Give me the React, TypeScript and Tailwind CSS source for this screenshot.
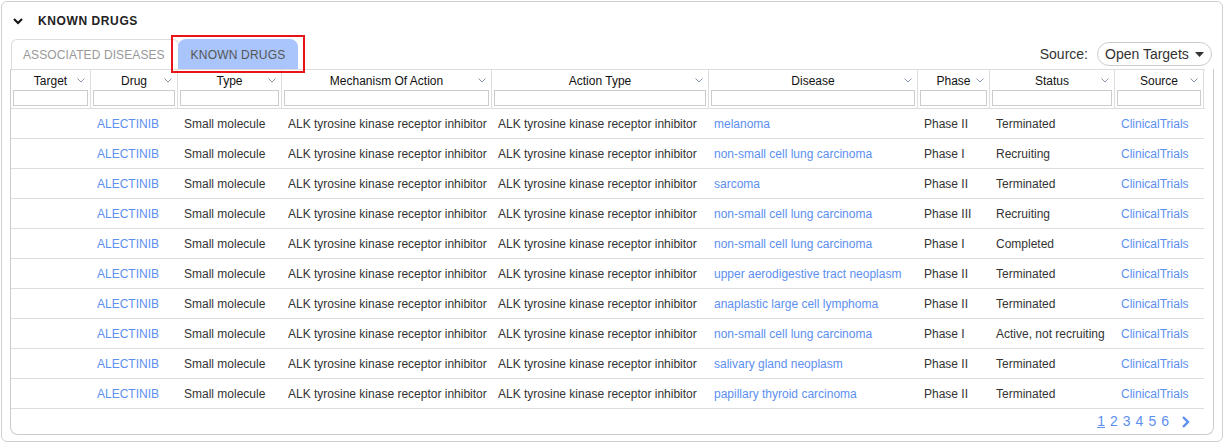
import React from "react";

const cols = [
  { name: "Target", w: 80 },
  { name: "Drug", w: 87 },
  { name: "Type", w: 104 },
  { name: "Mechanism Of Action", w: 210 },
  { name: "Action Type", w: 217 },
  { name: "Disease", w: 209 },
  { name: "Phase", w: 72 },
  { name: "Status", w: 125 },
  { name: "Source", w: 89 },
];

const rows: [string, string, string][] = [
  ["melanoma", "Phase II", "Terminated"],
  ["non-small cell lung carcinoma", "Phase I", "Recruiting"],
  ["sarcoma", "Phase II", "Terminated"],
  ["non-small cell lung carcinoma", "Phase III", "Recruiting"],
  ["non-small cell lung carcinoma", "Phase I", "Completed"],
  ["upper aerodigestive tract neoplasm", "Phase II", "Terminated"],
  ["anaplastic large cell lymphoma", "Phase II", "Terminated"],
  ["non-small cell lung carcinoma", "Phase I", "Active, not recruiting"],
  ["salivary gland neoplasm", "Phase II", "Terminated"],
  ["papillary thyroid carcinoma", "Phase II", "Terminated"],
];

function Chev() {
  return (
    <svg width="8" height="5" viewBox="0 0 8 5" className="absolute right-[5px] top-[8px]">
      <polyline points="0.5,0.5 4,4 7.5,0.5" fill="none" stroke="#8795ab" strokeWidth="1" />
    </svg>
  );
}

export default function App() {
  return (
    <div className="bg-white w-[1224px] h-[444px] pt-[1px] pl-[1px] text-[12px] text-[#333]" style={{ fontFamily: '"Liberation Sans", Arial, sans-serif' }}>
      <div className="w-[1222px] h-[441px] border border-[#cfcfcf] rounded-[6px] flex flex-col">
        {/* title */}
        <div className="h-[36px] flex items-center pl-[10px] pt-[1px]">
          <svg width="12" height="12" viewBox="0 0 12 12" className="mr-[14px]">
            <polyline points="2,4 6,8 10,4" fill="none" stroke="#111" strokeWidth="2" />
          </svg>
          <span className="font-bold text-[12px] tracking-[0.6px] text-[#222]">KNOWN DRUGS</span>
        </div>
        {/* tabs row */}
        <div className="h-[31px] flex items-end pl-[9px] pr-[9px] relative">
          <div className="h-[30px] w-[168px] border-l border-t border-r border-[#ddd] rounded-t-[6px] flex items-center pl-[11px] pt-[1px] text-[12px] text-[#999] tracking-[0.1px]">
            ASSOCIATED DISEASES
          </div>
          <div className="h-[30px] w-[120px] -ml-[1px] bg-[#a9c5fb] rounded-t-[8px] flex items-center justify-center pt-[1px] text-[12px] text-[#555] tracking-[0.2px] relative">
            KNOWN DRUGS
            <div className="absolute left-[-7px] top-[-4px] w-[134px] h-[38px] border-2 border-[#e8141a]" />
          </div>
          <div className="flex-1" />
          <div className="flex items-center self-start mt-[4px] mr-[1px]">
            <span className="text-[14px] text-[#333] mr-[9px]">Source:</span>
            <div className="h-[24px] w-[115px] border border-[#ccc] rounded-[12px] flex items-center pl-[7px] text-[14px] text-[#333]">
              Open Targets
              <svg width="9" height="5" viewBox="0 0 9 5" className="ml-[6px]">
                <polygon points="0,0 9,0 4.5,5" fill="#333" />
              </svg>
            </div>
          </div>
        </div>
        {/* panel */}
        <div className="w-[1204px] ml-[8px] h-[366px] border-l border-r border-b border-[#ccc] rounded-b-[8px] flex flex-col">
          <div className="w-[1194px] border-t border-[#ddd]">
            <div className="flex">
              {cols.map((c) => (
                <div
                  key={c.name}
                  style={{ width: c.w }}
                  className="h-[38px] border-r border-[#ddd] flex flex-col"
                >
                  <div className="h-[20px] pt-[1px] relative flex items-center justify-center text-[12px] text-[#111]">
                    {c.name}
                    <Chev />
                  </div>
                  <div className="px-[2px]">
                    <div className="h-[16px] border border-[#ccc] bg-white" />
                  </div>
                </div>
              ))}
            </div>
            <div className="border-t border-[#ddd]">
              {rows.map((r, i) => (
                <div key={i} className="flex h-[30px] items-center border-b border-[#ddd] w-[1193px]">
                  <div style={{ width: 80 }} />
                  <div style={{ width: 87 }} className="pl-[6px] text-[#5c8ff0]">ALECTINIB</div>
                  <div style={{ width: 104 }} className="pl-[6px]">Small molecule</div>
                  <div style={{ width: 210 }} className="pl-[6px] whitespace-nowrap">ALK tyrosine kinase receptor inhibitor</div>
                  <div style={{ width: 217 }} className="pl-[6px] whitespace-nowrap">ALK tyrosine kinase receptor inhibitor</div>
                  <div style={{ width: 209 }} className="pl-[5px] text-[#5c8ff0] whitespace-nowrap">{r[0]}</div>
                  <div style={{ width: 72 }} className="pl-[6px]">{r[1]}</div>
                  <div style={{ width: 125 }} className="pl-[6px] whitespace-nowrap">{r[2]}</div>
                  <div style={{ width: 89 }} className="pl-[6px] text-[#5c8ff0]">ClinicalTrials</div>
                </div>
              ))}
            </div>
          </div>
          <div className="flex-1 flex items-center justify-end pr-[22px] text-[14px] text-[#5c8ff0] gap-[5px]">
            <span className="underline">1</span>
            <span>2</span>
            <span>3</span>
            <span>4</span>
            <span>5</span>
            <span>6</span>
            <svg width="10" height="12" viewBox="0 0 10 12" className="ml-[7px]">
              <polyline points="2,1 7,6 2,11" fill="none" stroke="#5c8ff0" strokeWidth="2.4" />
            </svg>
          </div>
        </div>
      </div>
    </div>
  );
}
